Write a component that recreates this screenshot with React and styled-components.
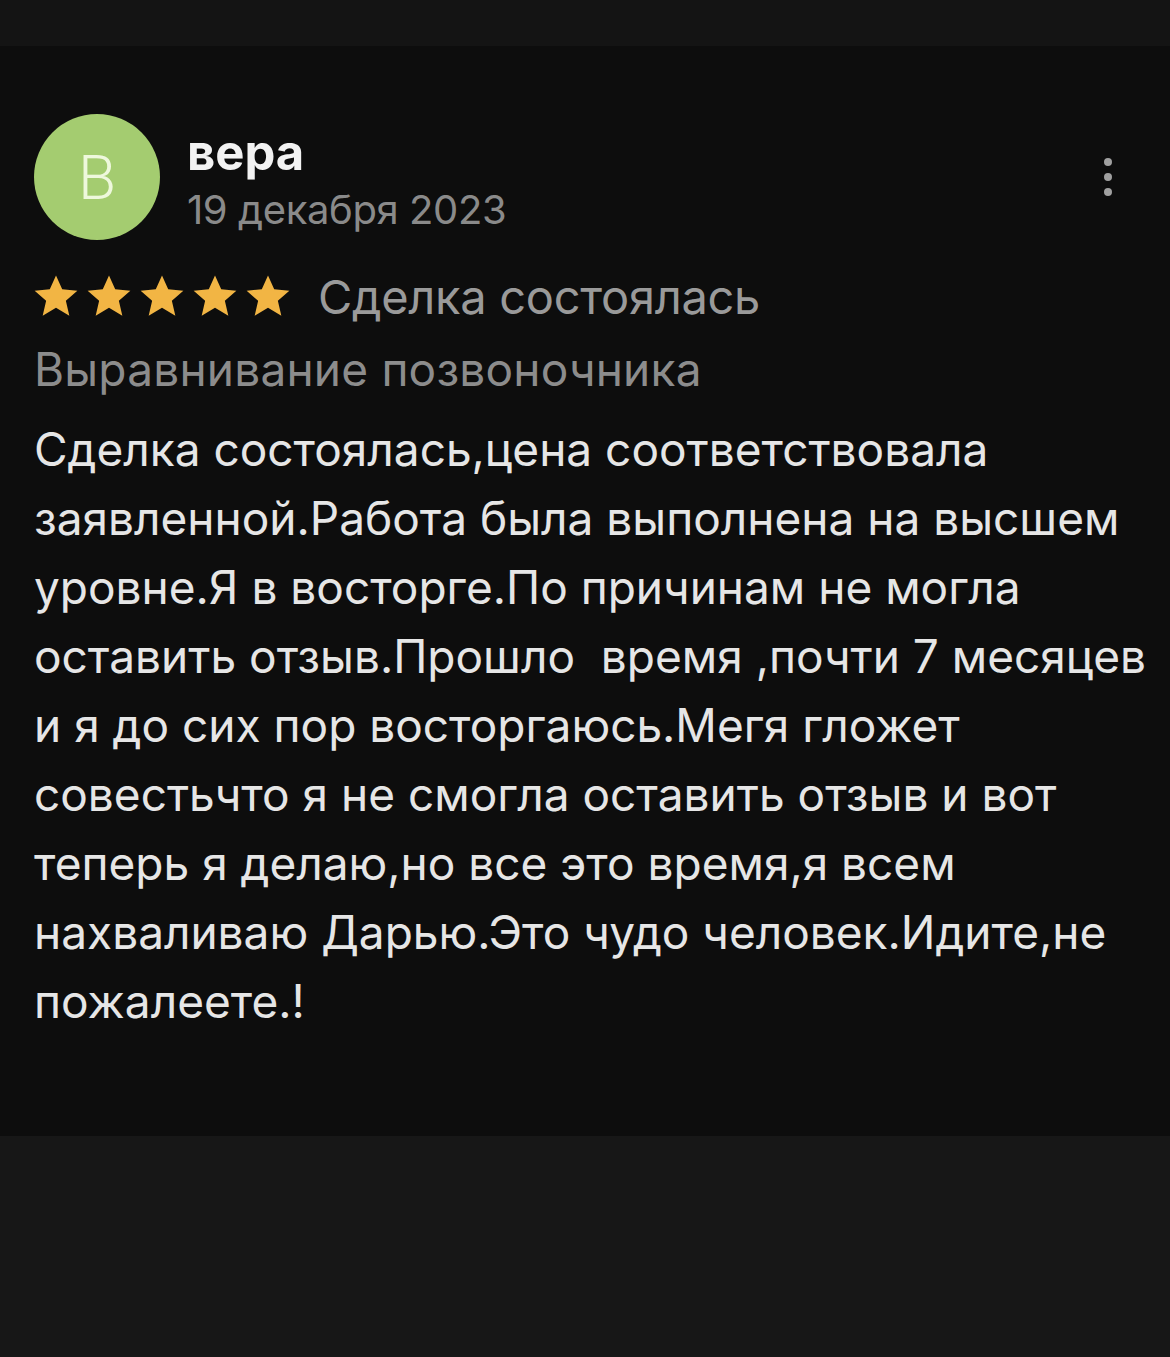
import React from "react";
import styled, { createGlobalStyle } from "styled-components";

const Global = createGlobalStyle`
  html, body { margin: 0; padding: 0; background: #161616; }
  body { font-family: Inter, Roboto, "Noto Sans", sans-serif; }
`;

const Page = styled.div`
  width: 1170px;
  height: 1357px;
  background: #171717;
  display: flex;
  flex-direction: column;
`;

const TopBand = styled.div`
  height: 46px;
  background: #141414;
`;

const Card = styled.div`
  background: #0d0d0d;
  padding: 68px 34px 0 34px;
  height: 1090px;
  box-sizing: border-box;
  display: flex;
  flex-direction: column;
`;

const Header = styled.div`
  display: flex;
  align-items: center;
  gap: 27px;
`;

const Avatar = styled.div`
  width: 126px;
  height: 126px;
  border-radius: 50%;
  background: #a4cc70;
  color: #eef8dc;
  display: flex;
  align-items: center;
  justify-content: center;
  font-family: Roboto, sans-serif;
  font-size: 62px;
  font-weight: 300;
  flex-shrink: 0;
`;

const Meta = styled.div`
  display: flex;
  flex-direction: column;
  flex: 1;
  margin-top: 10px;
`;

const Name = styled.div`
  font-size: 49px;
  font-weight: 700;
  color: #f2f2f2;
  line-height: 56px;
`;

const DateText = styled.div`
  font-size: 40px;
  color: #8a8a8a;
  line-height: 58px;
  letter-spacing: -0.4px;
`;

const Kebab = styled.div`
  display: flex;
  flex-direction: column;
  gap: 7px;
  margin-right: 24px;
  align-self: center;
`;

const Dot = styled.span`
  width: 8px;
  height: 8px;
  border-radius: 50%;
  background: #a0a0a0;
`;

const RatingRow = styled.div`
  display: flex;
  align-items: center;
  margin-top: 32px;
  height: 48px;
`;

const Stars = styled.div`
  display: flex;
  gap: 9px;
  margin-right: 28px;
`;

const Status = styled.div`
  font-size: 47px;
  color: #9a9a9a;
  letter-spacing: -0.3px;
`;

const Service = styled.div`
  font-size: 46px;
  color: #8c8c8c;
  margin-top: 20px;
  letter-spacing: 0.2px;
  line-height: 58px;
`;

const Body = styled.div`
  margin-top: 17px;
  font-size: 46px;
  color: #e6e6e6;
  line-height: 69px;
  letter-spacing: 0px;
`;

const Line = styled.div`
  white-space: pre;
`;

const Star = () => (
  <svg width="44" height="42" viewBox="0 0 24 23">
    <path
      d="M12 0.3l3.4 7.5 8.3.8-6.3 5.5 1.9 8.2L12 17.9l-7.3 4.4 1.9-8.2L.3 8.6l8.3-.8z"
      fill="#f2b544"
    />
  </svg>
);

const lines = [
  "Сделка состоялась,цена соответствовала",
  "заявленной.Работа была выполнена на высшем",
  "уровне.Я в восторге.По причинам не могла",
  "оставить отзыв.Прошло  время ,почти 7 месяцев",
  "и я до сих пор восторгаюсь.Мегя гложет",
  "совестьчто я не смогла оставить отзыв и вот",
  "теперь я делаю,но все это время,я всем",
  "нахваливаю Дарью.Это чудо человек.Идите,не",
  "пожалеете.!",
];

export default function App() {
  return (
    <Page>
      <Global />
      <TopBand />
      <Card>
        <Header>
          <Avatar>В</Avatar>
          <Meta>
            <Name>вера</Name>
            <DateText>19 декабря 2023</DateText>
          </Meta>
          <Kebab>
            <Dot />
            <Dot />
            <Dot />
          </Kebab>
        </Header>
        <RatingRow>
          <Stars>
            {[0, 1, 2, 3, 4].map((i) => (
              <Star key={i} />
            ))}
          </Stars>
          <Status>Сделка состоялась</Status>
        </RatingRow>
        <Service>Выравнивание позвоночника</Service>
        <Body>
          {lines.map((l, i) => (
            <Line key={i}>{l}</Line>
          ))}
        </Body>
      </Card>
    </Page>
  );
}
